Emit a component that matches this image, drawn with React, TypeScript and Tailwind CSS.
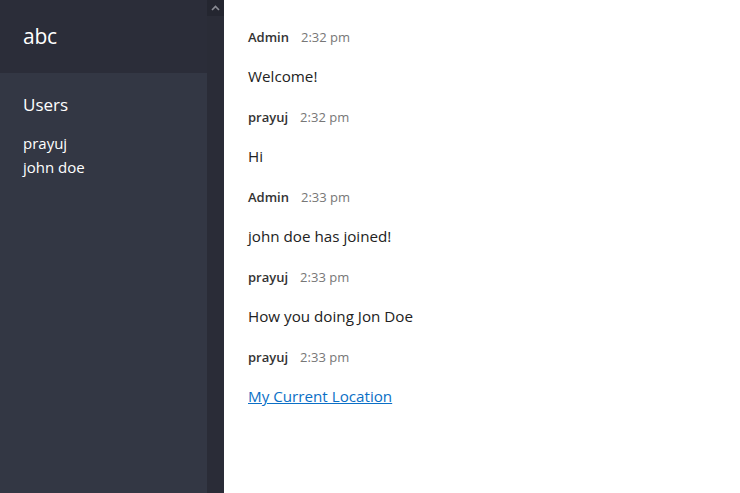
import React from 'react';

const messages = [
  { name: 'Admin', time: '2:32 pm', text: 'Welcome!' },
  { name: 'prayuj', time: '2:32 pm', text: 'Hi' },
  { name: 'Admin', time: '2:33 pm', text: 'john doe has joined!' },
  { name: 'prayuj', time: '2:33 pm', text: 'How you doing Jon Doe' },
  { name: 'prayuj', time: '2:33 pm', text: 'My Current Location', link: true },
];

const App: React.FC = () => {
  return (
    <div className="flex h-[493px] w-[740px] overflow-hidden bg-white font-['Open_Sans',sans-serif]">
      {/* Sidebar */}
      <aside className="flex flex-col w-[207px] bg-[#333744] text-white">
        <div className="h-[73px] bg-[#2b2d39] flex items-center px-[23px]">
          <h1 className="text-[21px] leading-none tracking-[-0.2px]">abc</h1>
        </div>
        <div className="px-[23px] pt-[21px]">
          <h2 className="text-[17px] leading-[22px]">Users</h2>
          <ul className="mt-[15px] text-[15px] leading-[24px]">
            <li>prayuj</li>
            <li>john doe</li>
          </ul>
        </div>
      </aside>

      {/* Scrollbar */}
      <div className="w-[17px] bg-[#2a2c37] flex flex-col">
        <div className="h-[16px] bg-[#242630] flex items-center justify-center">
          <svg width="9" height="6" viewBox="0 0 9 6">
            <path d="M1 5 L4.5 1.5 L8 5" stroke="#8a8c94" strokeWidth="1.6" fill="none" />
          </svg>
        </div>
      </div>

      {/* Chat */}
      <main className="flex-1 pl-[24px] pt-[28px]">
        {messages.map((m, i) => (
          <div key={i} className="h-[80px]">
            <div className="flex items-baseline gap-[12px] h-[20px]">
              <span className="text-[13px] font-semibold text-[#333]">{m.name}</span>
              <span className="text-[13px] text-[#777]">{m.time}</span>
            </div>
            <div className="mt-[17px] text-[15.2px] leading-[22px] text-[#222]">
              {m.link ? (
                <a href="#" className="text-[#0b6fc6] underline">{m.text}</a>
              ) : (
                m.text
              )}
            </div>
          </div>
        ))}
      </main>
    </div>
  );
};

export default App;
